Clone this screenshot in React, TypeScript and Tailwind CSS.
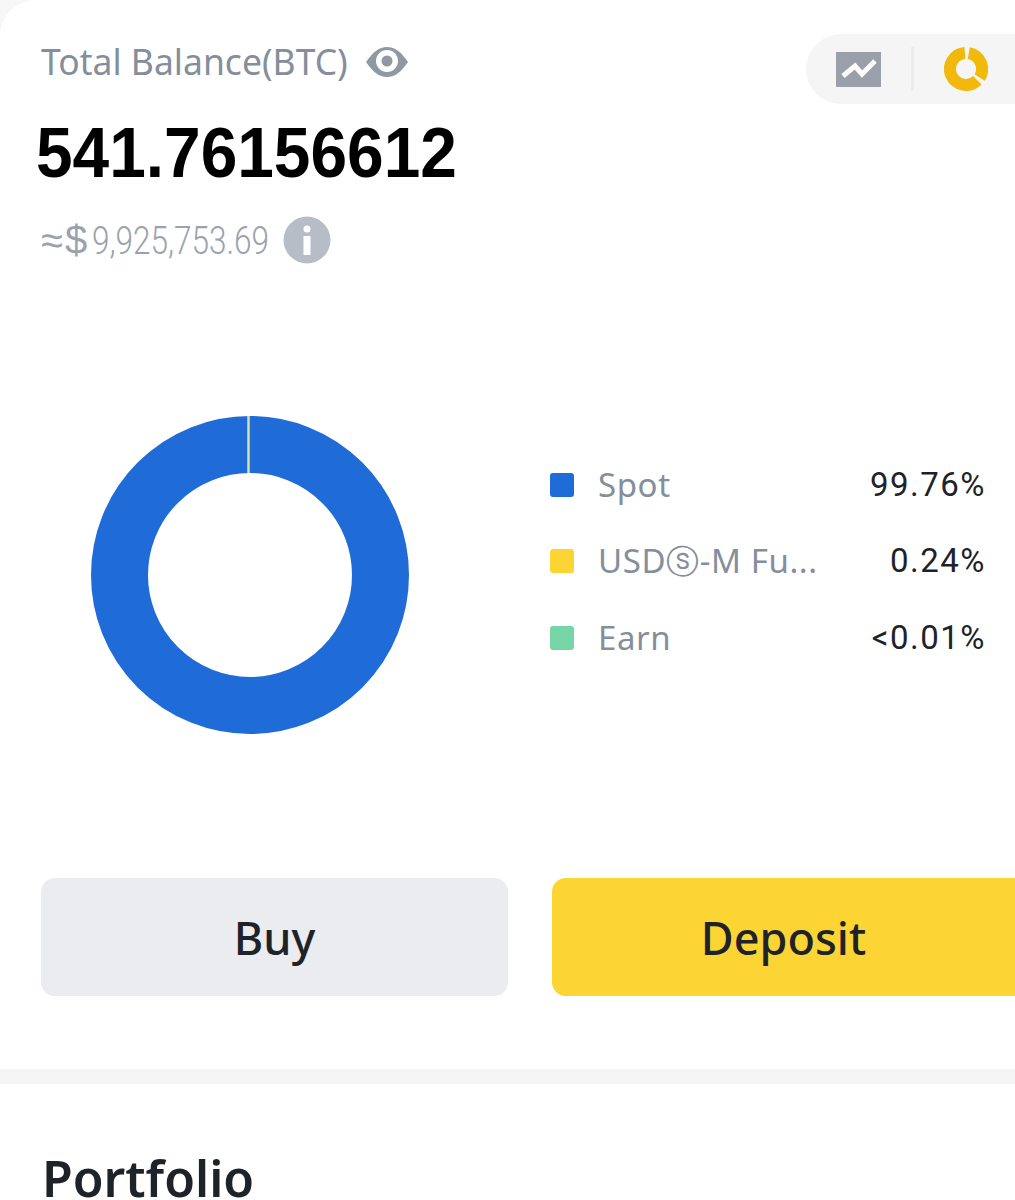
const legend = [
  { name: "Spot", value: "99.76%", color: "bg-[#1f6bd8]" },
  { name: "USDⓢ-M Fu...", value: "0.24%", color: "bg-[#fcd535]" },
  { name: "Earn", value: "<0.01%", color: "bg-[#76d6a8]" },
];

const EyeIcon = () => (
  <svg width="44" height="34" viewBox="0 0 44 34" fill="none">
    <path d="M1 17 C8 7 14 2 22 2 C30 2 36 7 43 17 C36 27 30 32 22 32 C14 32 8 27 1 17 Z" fill="#8f98a3" />
    <circle cx="22" cy="16" r="11" fill="#fff" />
    <circle cx="22" cy="16" r="5.5" fill="#8f98a3" />
  </svg>
);

const InfoIcon = () => (
  <svg width="48" height="48" viewBox="0 0 48 48">
    <circle cx="24" cy="24" r="23.5" fill="#b7bdc6" />
    <circle cx="24" cy="13" r="3.5" fill="#fff" />
    <rect x="20.5" y="20" width="7" height="19" fill="#fff" />
  </svg>
);

const ChartIcon = () => (
  <svg width="45" height="35" viewBox="0 0 45 35">
    <rect width="45" height="35" fill="#9a9fa9" />
    <path d="M7 24 L19 14 L26 22 L39 9" fill="none" stroke="#fff" strokeWidth="5" />
  </svg>
);

const PieIcon = () => (
  <svg width="44" height="44" viewBox="0 0 44 44" fill="none" stroke="#f0b90b" strokeWidth="12">
    <path d="M24.8 6.2 A16 16 0 0 1 35.6 30.5" />
    <path d="M33.3 33.3 A16 16 0 1 1 20.9 6" />
  </svg>
);

const Donut = () => (
  <svg width="318" height="318" viewBox="0 0 318 318" fill="none">
    <circle cx="159" cy="159" r="130.5" stroke="#1f6bd8" strokeWidth="57" />
    <line x1="157.5" y1="0" x2="157.5" y2="57" stroke="#d8e0a8" strokeWidth="2.5" />
  </svg>
);

export default function App() {
  return (
    <div className="w-[1015px] h-[1200px] overflow-hidden bg-[#f7f7f7] font-['Noto_Sans',sans-serif]">
      <div className="h-full bg-white rounded-tl-[36px]">
        {/* Balance header */}
        <div className="flex justify-between h-[346px] pt-[34px]">
          <div className="pl-[41px]">
            <div className="flex items-center gap-[17px] h-[56px]">
              <span className="text-[35.5px] text-[#848e9c]">Total Balance(BTC)</span>
              <EyeIcon />
            </div>
            <div className="-ml-[5px] mt-[23px] w-[421px] origin-left scale-x-[0.94] whitespace-nowrap font-['Liberation_Sans',sans-serif] font-bold text-[70px] leading-[80px] text-black">
              541.76156612
            </div>
            <div className="flex items-center mt-[23px] h-[48px] text-[#9aa2ad]">
              <span className="w-[51px] text-[40px] leading-none font-['Liberation_Sans',sans-serif] tracking-[2px]">≈$</span>
              <span className="w-[175px] origin-left scale-x-[0.83] whitespace-nowrap font-['Roboto',sans-serif] font-light text-[38px] leading-none translate-y-[1px]">
                9,925,753.69
              </span>
              <span className="ml-[16px]">
                <InfoIcon />
              </span>
            </div>
          </div>
          <div className="flex items-center gap-[30px] h-[70px] w-[209px] pl-[30px] rounded-l-[35px] bg-[#f5f5f5]">
            <ChartIcon />
            <div className="w-[3px] h-[44px] bg-[#eaecef]" />
            <PieIcon />
          </div>
        </div>

        {/* Allocation chart */}
        <div className="flex items-center h-[458px] pl-[91px] py-[4px]">
          <Donut />
          <div className="ml-[141px] mb-[28px] w-[434px] flex flex-col gap-[32px]">
            {legend.map((row) => (
              <div key={row.name} className="flex items-center h-[44.5px]">
                <div className={`w-[24px] h-[24px] rounded-[3px] ${row.color}`} />
                <span className="ml-[24px] text-[33px] tracking-[0.6px] text-[#848e9c]">{row.name}</span>
                <span className="ml-auto text-[33px] tracking-[1.5px] text-[#1e2329] font-['Roboto',sans-serif] -mr-[2px]">
                  {row.value}
                </span>
              </div>
            ))}
          </div>
        </div>

        {/* Actions */}
        <div className="flex gap-[44px] pl-[41px] mt-[74px] w-[1030px]">
          <button className="w-[467px] h-[118px] pt-[2px] rounded-[14px] bg-[#eaecef] text-[45px] font-medium text-[#1e2329]">
            Buy
          </button>
          <button className="flex-1 pr-[15px] pt-[2px] h-[118px] rounded-[14px] bg-[#fcd535] text-[45px] font-medium text-[#1e2329]">
            Deposit
          </button>
        </div>

        <div className="h-[15px] mt-[73px] bg-[#f5f5f5]" />

        <h2 className="pl-[42px] mt-[62px] text-[50px] leading-[64px] font-semibold text-[#1e2329]">Portfolio</h2>
      </div>
    </div>
  );
}
